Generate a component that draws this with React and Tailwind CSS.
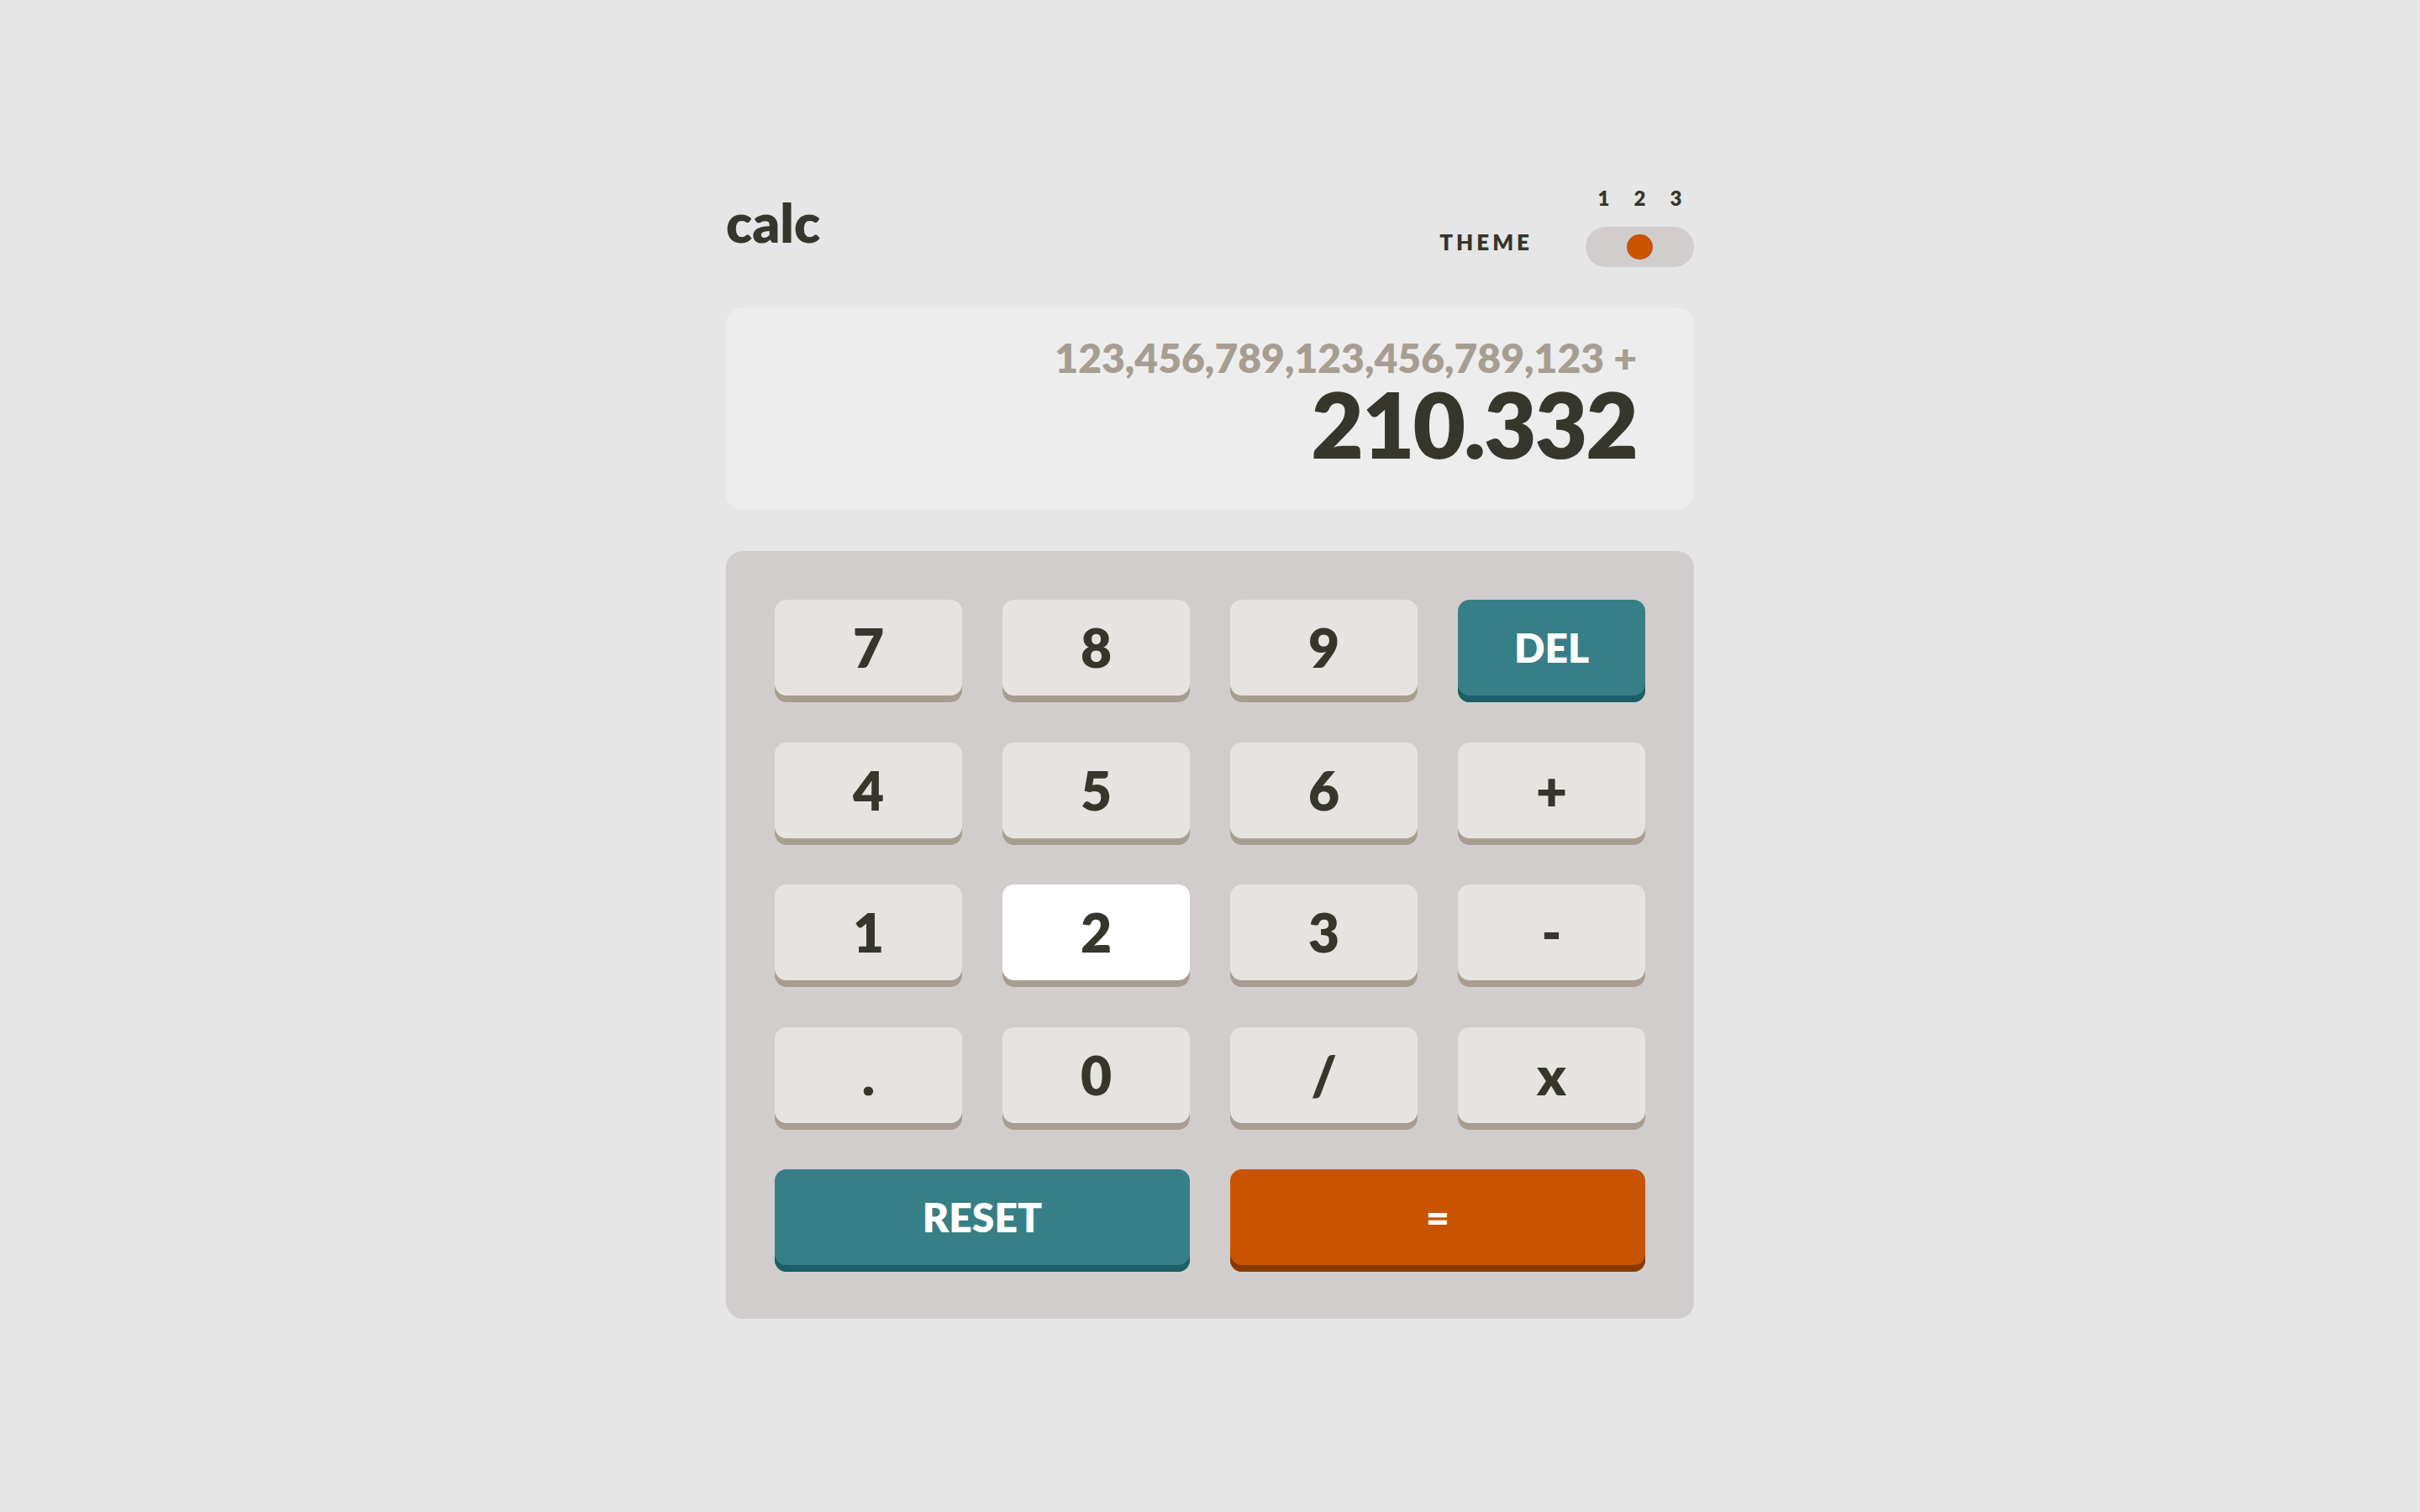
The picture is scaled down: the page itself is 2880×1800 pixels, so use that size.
import React from 'react';

const keys = [
    { label: '7' }, { label: '8' }, { label: '9' }, { label: 'DEL', variant: 'del' },
    { label: '4' }, { label: '5' }, { label: '6' }, { label: '+' },
    { label: '1' }, { label: '2', active: true }, { label: '3' }, { label: '-' },
    { label: '.' }, { label: '0' }, { label: '/' }, { label: 'x' },
    { label: 'RESET', variant: 'del', wide: true }, { label: '=', variant: 'eq', wide: true },
];

const Key = ({ label, variant = 'num', wide, active }) => {
    const styles = {
        num: 'text-[64px] text-[#36362c] shadow-[inset_0_-8px_0_#a79e91] ' + (active ? 'bg-white' : 'bg-[#e5e4e1]'),
        del: 'text-[48px] text-white bg-[#377f86] shadow-[inset_0_-8px_0_#1b6066]',
        eq: 'text-[48px] text-white bg-[#c85402] shadow-[inset_0_-8px_0_#873901]',
    };
    return (
        <button
            className={`h-[122px] pb-[8px] rounded-[14px] font-extrabold leading-none flex items-center justify-center ${wide ? 'col-span-2' : ''} ${styles[variant]}`}
        >
            {label}
        </button>
    );
};

const App = () => {
    return (
        <div className="min-h-screen bg-[#e6e6e6] flex justify-center pt-[224px] font-['Lato',sans-serif] text-[#36362c]">
            <div className="w-[1152px]">
                {/* Header */}
                <div className="flex items-start justify-between mb-[48px]">
                    <h1 className="mt-[9px] text-[64px] leading-none font-extrabold">calc</h1>
                    <div className="flex items-end">
                        <span className="mb-[17px] mr-[63px] text-[26px] leading-none font-extrabold tracking-[4px]">THEME</span>
                        <div className="flex flex-col w-[129px]">
                            <div className="grid grid-cols-3 text-center text-[24px] leading-none font-extrabold mb-[22px]">
                                <span>1</span>
                                <span>2</span>
                                <span>3</span>
                            </div>
                            <div className="h-[48px] rounded-full bg-[#d2cdcd] flex items-center justify-center">
                                <div className="w-[31px] h-[30px] rounded-full bg-[#c85402]"></div>
                            </div>
                        </div>
                    </div>
                </div>

                {/* Display */}
                <div className="h-[241px] rounded-[20px] bg-[#ededed] pt-[36px] pr-[68px] flex flex-col items-end font-extrabold">
                    <p className="text-[48px] leading-none text-[#a79e91]">123,456,789,123,456,789,123 +</p>
                    <p className="text-[108px] leading-none tracking-[-2px]">210.332</p>
                </div>

                {/* Keypad */}
                <div className="mt-[49px] rounded-[20px] bg-[#d2cdcd] pt-[58px] px-[58px] pb-[56px] grid grid-cols-4 gap-x-[48px] gap-y-[47.5px]">
                    {keys.map(k => (
                        <Key key={k.label} {...k} />
                    ))}
                </div>
            </div>
        </div>
    );
};

export default App;
